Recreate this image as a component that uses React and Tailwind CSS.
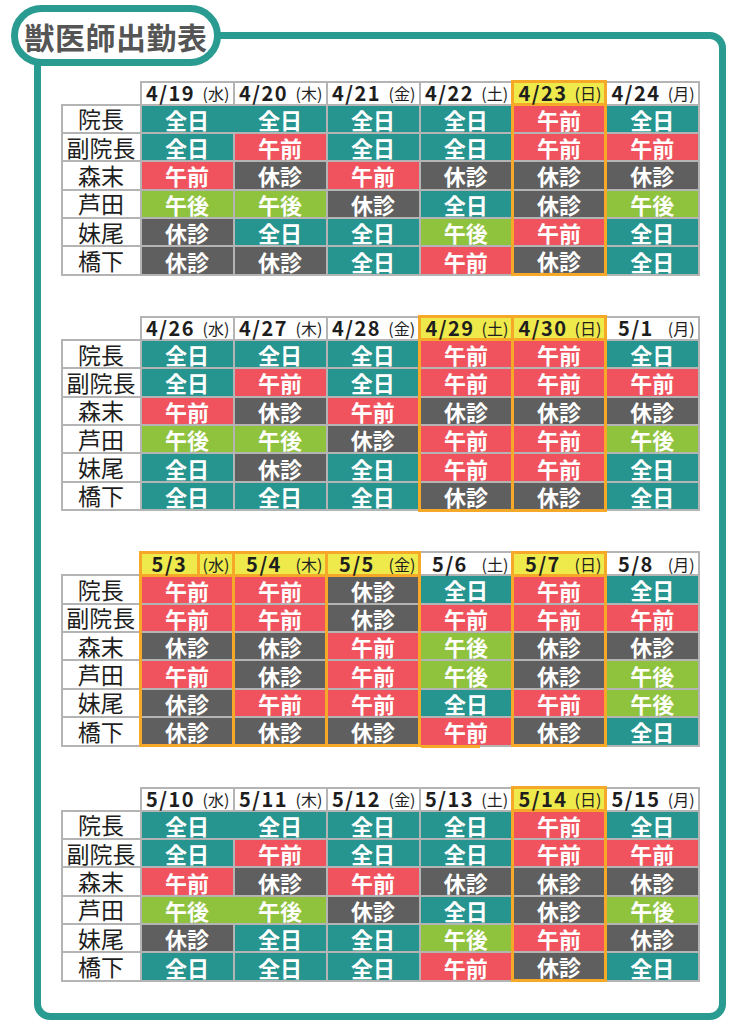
import React from 'react';

const names = ['院長', '副院長', '森末', '芦田', '妹尾', '橋下'];

const cellBg = {
  全日: 'bg-[#26958f]',
  午前: 'bg-[#f0535d]',
  休診: 'bg-[#5f5f60]',
  午後: 'bg-[#8fc33e]',
};

const joinLeft = {
  全日: 'border-l-[#26958f]',
  午後: 'border-l-[#8fc33e]',
};
const joinRight = {
  全日: 'border-r-[#26958f]',
  午後: 'border-r-[#8fc33e]',
};

// "+" at the end of a value = no divider with the next cell
const weeks = [
  {
    days: [
      { d: '4/19', w: '水' },
      { d: '4/20', w: '木' },
      { d: '4/21', w: '金' },
      { d: '4/22', w: '土' },
      { d: '4/23', w: '日', hl: true },
      { d: '4/24', w: '月' },
    ],
    rows: [
      ['全日+', '全日', '全日', '全日', '午前', '全日'],
      ['全日', '午前', '全日', '全日', '午前', '午前'],
      ['午前', '休診', '午前', '休診', '休診', '休診'],
      ['午後', '午後', '休診', '全日', '休診', '午後'],
      ['休診', '全日', '全日', '午後', '午前', '全日'],
      ['休診', '休診', '全日', '午前', '休診', '全日'],
    ],
  },
  {
    days: [
      { d: '4/26', w: '水' },
      { d: '4/27', w: '木' },
      { d: '4/28', w: '金' },
      { d: '4/29', w: '土', hl: true },
      { d: '4/30', w: '日', hl: true },
      { d: '5/1', w: '月' },
    ],
    rows: [
      ['全日', '全日', '全日', '午前', '午前', '全日'],
      ['全日', '午前', '全日', '午前', '午前', '午前'],
      ['午前', '休診', '午前', '休診', '休診', '休診'],
      ['午後', '午後', '休診', '午前', '午前', '午後'],
      ['全日', '休診', '全日', '午前', '午前', '全日'],
      ['全日', '全日', '全日', '休診', '休診', '全日'],
    ],
  },
  {
    days: [
      { d: '5/3', w: '水', hl: true, split: true },
      { d: '5/4', w: '木', hl: true },
      { d: '5/5', w: '金', hl: true },
      { d: '5/6', w: '土', tail: true },
      { d: '5/7', w: '日', hl: true },
      { d: '5/8', w: '月' },
    ],
    rows: [
      ['午前', '午前', '休診', '全日', '午前', '全日'],
      ['午前', '午前', '休診', '午前', '午前', '午前'],
      ['休診', '休診', '午前', '午後', '休診', '休診'],
      ['午前', '休診', '午前', '午後', '休診', '午後'],
      ['休診', '午前', '午前', '全日', '午前', '午後'],
      ['休診', '休診', '休診', '午前', '休診', '全日'],
    ],
  },
  {
    days: [
      { d: '5/10', w: '水' },
      { d: '5/11', w: '木' },
      { d: '5/12', w: '金' },
      { d: '5/13', w: '土' },
      { d: '5/14', w: '日', hl: true },
      { d: '5/15', w: '月' },
    ],
    rows: [
      ['全日+', '全日', '全日', '全日', '午前', '全日'],
      ['全日', '午前', '全日', '全日', '午前', '午前'],
      ['午前', '休診', '午前', '休診', '休診', '休診'],
      ['午後+', '午後', '休診', '全日', '休診', '午後'],
      ['休診', '全日', '全日', '午後', '午前', '休診'],
      ['全日', '全日', '全日', '午前', '休診', '全日'],
    ],
  },
];

function HeaderCell({ day }) {
  const cls = day.hl
    ? 'p-0 h-[21px] border-[3px] border-[#f6a828] bg-[#eeea4b]'
    : 'p-0 h-[21px] border-2 border-[#b4b4b4] bg-white';
  return (
    <th className={cls}>
      <div className="flex items-center h-full text-[#1e1e1e]">
        <span
          className={
            day.split
              ? 'w-[58px] h-full flex items-center justify-center text-[20px] font-bold tracking-[1.5px] leading-none border-r-[3px] border-[#f6a828]'
              : 'w-[58px] h-full flex items-center justify-center text-[20px] font-bold tracking-[1.5px] leading-none'
          }
        >
          {day.d}
        </span>
        <span className="flex-1 text-center text-[16px] font-normal leading-none">
          ({day.w})
        </span>
      </div>
    </th>
  );
}

function Schedule({ week }) {
  return (
    <table className="mx-auto table-fixed border-collapse w-[637px]">
      <colgroup>
        <col className="w-[79px]" />
        {week.days.map((day) => (
          <col key={day.d} className="w-[93px]" />
        ))}
      </colgroup>
      <thead>
        <tr>
          <th className="p-0 border-0"></th>
          {week.days.map((day) => (
            <HeaderCell key={day.d} day={day} />
          ))}
        </tr>
      </thead>
      <tbody>
        {week.rows.map((row, r) => (
          <tr key={r}>
            <td className="p-0 h-[28.4px] border-2 border-[#b4b4b4] bg-white text-center text-[23px] leading-none text-[#1e1e1e]">
              {names[r]}
            </td>
            {row.map((raw, c) => {
              const v = raw.replace('+', '');
              const day = week.days[c];
              const prev = c > 0 ? row[c - 1] : '';
              const classes = [
                'relative p-0 h-[28.4px] border-2 border-[#b4b4b4] text-center text-white font-bold text-[22px] leading-none',
                cellBg[v],
              ];
              if (raw.endsWith('+')) classes.push(joinRight[v]);
              if (prev.endsWith('+')) classes.push(joinLeft[v]);
              if (day.hl) {
                classes.push('border-x-[3px] border-x-[#f6a828]');
                if (r === week.rows.length - 1) classes.push('border-b-[3px] border-b-[#f6a828]');
              }
              return (
                <td key={c} className={classes.join(' ')}>
                  {v}
                  {day.tail && r === week.rows.length - 1 && (
                    <span className="absolute left-0 bottom-[-3px] w-[59px] h-[3px] bg-[#f6a828]"></span>
                  )}
                </td>
              );
            })}
          </tr>
        ))}
      </tbody>
    </table>
  );
}

export default function App() {
  return (
    <div className="relative w-[729px] h-[1024px] bg-white font-['Noto_Sans_CJK_JP',sans-serif] pt-[32px] pl-[34px]">
      <div className="w-[692px] h-[988px] border-[7px] border-[#2a9b90] rounded-[16px] pt-[41px] flex flex-col gap-[39px]">
        {weeks.map((week, i) => (
          <Schedule key={i} week={week} />
        ))}
      </div>

      <div className="absolute left-[11px] top-[5px] w-[210px] h-[61px] rounded-full border-[7px] border-[#2a9b90] bg-white flex items-center justify-center">
        <span className="text-[30px] font-bold text-[#555555] leading-none tracking-[0.5px]">獣医師出勤表</span>
      </div>
    </div>
  );
}
